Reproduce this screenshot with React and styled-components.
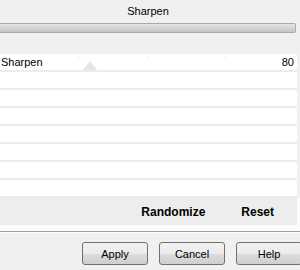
import React from "react";
import styled, { createGlobalStyle } from "styled-components";

const Global = createGlobalStyle`
  html, body { margin: 0; padding: 0; background: #f0f0f0; }
  body { font-family: "Liberation Sans", Arial, sans-serif; font-size: 11px; color: #000; }
`;

const Page = styled.div`
  width: 300px;
  height: 270px;
  overflow: hidden;
  display: flex;
  flex-direction: column;
  background: #f0f0f0;
`;

const Title = styled.div`
  width: 296px;
  height: 23px;
  line-height: 22px;
  text-align: center;
  font-size: 11px;
`;

const Bar = styled.div`
  width: 295px;
  height: 8px;
  border: 1px solid #a9a9a9;
  border-left: none;
  border-radius: 0 2px 2px 0;
  background: linear-gradient(#e6e6e6 0%, #d4d4d4 50%, #c4c4c4 100%);
`;

const Gap = styled.div`
  height: ${(p) => p.$h}px;
`;

const ListArea = styled.div`
  width: 297px;
  background: #fff;
  display: flex;
  flex-direction: column;
`;

const Row = styled.div`
  position: relative;
  height: 16px;
  border-bottom: 2px solid #ececec;
  display: flex;
  align-items: center;
  justify-content: space-between;
  padding: 0 3px 0 1px;
`;

const Label = styled.span`
  font-size: 11px;
`;

const Marker = styled.div`
  position: absolute;
  left: 83px;
  bottom: 0;
  width: 0;
  height: 0;
  border-left: 7px solid transparent;
  border-right: 7px solid transparent;
  border-bottom: 9px solid #e6e6e6;
`;

const Tick = styled.div`
  position: absolute;
  top: 0;
  left: ${(p) => p.$x}px;
  width: 1px;
  height: 5px;
  background: #f2f2f2;
`;

const ActionWrap = styled.div`
  background: #fbfbfb;
  padding-bottom: 6px;
`;

const ActionPanel = styled.div`
  width: 274px;
  height: 27px;
  background: #ededed;
  display: flex;
  align-items: center;
  justify-content: flex-end;
  gap: 36px;
  padding-right: 23px;
`;

const ActionText = styled.span`
  font-size: 12px;
  font-weight: bold;
`;

const Separator = styled.div`
  height: 1px;
  background: #a0a0a0;
  border-bottom: 1px solid #ffffff;
`;

const Footer = styled.div`
  display: flex;
  gap: 11px;
  padding: 9px 0 0 82px;
`;

const Button = styled.div`
  flex: none;
  width: 64px;
  height: 21px;
  border: 1px solid #707070;
  border-radius: 3px;
  background: linear-gradient(#f2f2f2 0%, #ebebeb 50%, #dddddd 51%, #cfcfcf 100%);
  display: flex;
  align-items: center;
  justify-content: center;
  font-size: 11px;
`;

export default function App() {
  const rows = [
    { label: "Sharpen", value: "80", slider: true },
    {}, {}, {}, {}, {}, {}, {},
  ];
  return (
    <Page>
      <Global />
      <Title>Sharpen</Title>
      <Bar />
      <Gap $h={21} />
      <ListArea>
        {rows.map((r, i) => (
          <Row key={i}>
            {r.slider && (
              <>
                <Tick $x={78} />
                <Tick $x={148} />
                <Tick $x={225} />
                <Marker />
              </>
            )}
            <Label>{r.label || ""}</Label>
            <Label>{r.value || ""}</Label>
          </Row>
        ))}
      </ListArea>
      <ActionWrap>
        <ActionPanel>
          <ActionText>Randomize</ActionText>
          <ActionText>Reset</ActionText>
        </ActionPanel>
      </ActionWrap>
      <Separator />
      <Footer>
        <Button>Apply</Button>
        <Button>Cancel</Button>
        <Button>Help</Button>
      </Footer>
    </Page>
  );
}
